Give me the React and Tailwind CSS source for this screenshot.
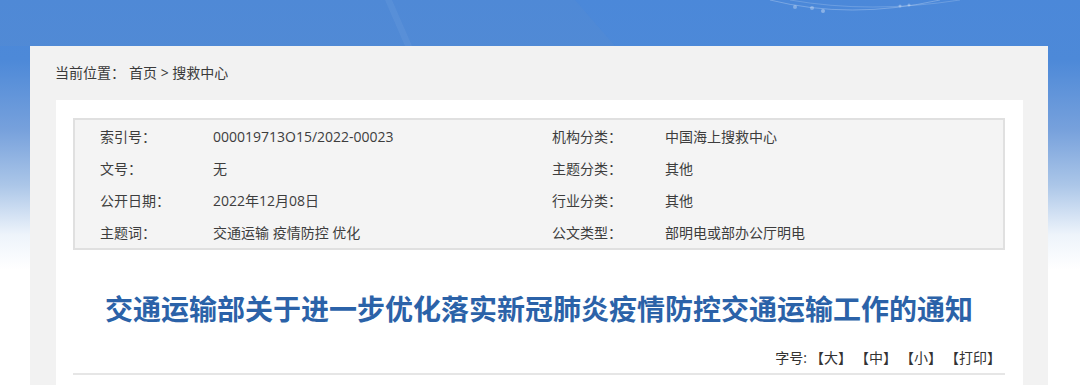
import React from 'react';

const font = "font-['Open_Sans','Noto_Sans_CJK_SC',sans-serif]";

const infoRows = [
  ['索引号：', '000019713O15/2022-00023', '机构分类：', '中国海上搜救中心'],
  ['文号：', '无', '主题分类：', '其他'],
  ['公开日期：', '2022年12月08日', '行业分类：', '其他'],
  ['主题词：', '交通运输 疫情防控 优化', '公文类型：', '部明电或部办公厅明电'],
];

function TopDecoration() {
  // faint banner artwork behind the page
  return (
    <svg className="absolute left-0 top-0 pointer-events-none" width="1080" height="60" viewBox="0 0 1080 60">
      <polygon points="0,0 575,0 615,46 0,46" fill="#5a8bd0" opacity="0.35" />
      <polygon points="385,0 392,0 412,46 405,46" fill="#ffffff" opacity="0.05" />
      <path d="M770 0 Q 850 20 940 0" stroke="#ffffff" strokeOpacity="0.25" fill="none" strokeWidth="1" />
      <path d="M790 0 Q 870 14 960 0" stroke="#ffffff" strokeOpacity="0.18" fill="none" strokeWidth="1" />
      <circle cx="795" cy="7" r="2" fill="#ffffff" opacity="0.3" />
      <circle cx="812" cy="8" r="2" fill="#ffffff" opacity="0.3" />
      <circle cx="823" cy="11" r="2" fill="#ffffff" opacity="0.35" />
      <circle cx="900" cy="6" r="1.5" fill="#ffffff" opacity="0.3" />
      <circle cx="909" cy="5" r="1.5" fill="#ffffff" opacity="0.3" />
    </svg>
  );
}

export default function App() {
  return (
    <div className={`relative w-[1080px] h-[385px] overflow-hidden bg-[linear-gradient(180deg,#4b88d9_0px,#4d89d8_60px,#77a1dc_130px,#abc6e8_185px,#eef4fb_235px,#ffffff_270px)] ${font}`}>
      <TopDecoration />
      <div className="relative pt-[46px] pl-[30px]">
        <div className="w-[1018px] h-[360px] bg-[#f2f2f2] pl-[26px] pr-[25px]">
          {/* Breadcrumb */}
          <div className="pt-[17px] h-[54px] text-[14px] leading-[20px] text-[#3a3a3a] -ml-px">
            当前位置：<span className="ml-[4px]">首页 &gt; 搜救中心</span>
          </div>

          {/* Content */}
          <div className="bg-white h-full px-[17px] pt-[18px] pr-[18px]">
            <div className="border-2 border-[#e0e0e0] bg-[#f4f4f4] pl-[25px] text-[14px] text-[#3d3d3d]">
              {infoRows.map((r, i) => (
                <div key={i} className="grid grid-cols-[113px_339px_113px_1fr] h-[32px] items-center">
                  <span>{r[0]}</span>
                  <span>{r[1]}</span>
                  <span>{r[2]}</span>
                  <span>{r[3]}</span>
                </div>
              ))}
            </div>

            <h1 className="mt-[38px] text-center text-[28px] leading-[40px] font-bold text-[#2b62a8] font-['Noto_Sans_CJK_SC',sans-serif]">
              交通运输部关于进一步优化落实新冠肺炎疫情防控交通运输工作的通知
            </h1>

            <div className="mt-[20px] flex justify-end text-[14px] leading-[20px] text-[#333] pr-[4px]">
              <span>字号:</span>
              <span className="ml-[3px]">【大】</span>
              <span className="ml-[3px]">【中】</span>
              <span className="ml-[3px]">【小】</span>
              <span className="ml-[3px]">【打印】</span>
            </div>

            <div className="mt-[5px] h-[2px] bg-[#e6e6e6]" />
          </div>
        </div>
      </div>
    </div>
  );
}
